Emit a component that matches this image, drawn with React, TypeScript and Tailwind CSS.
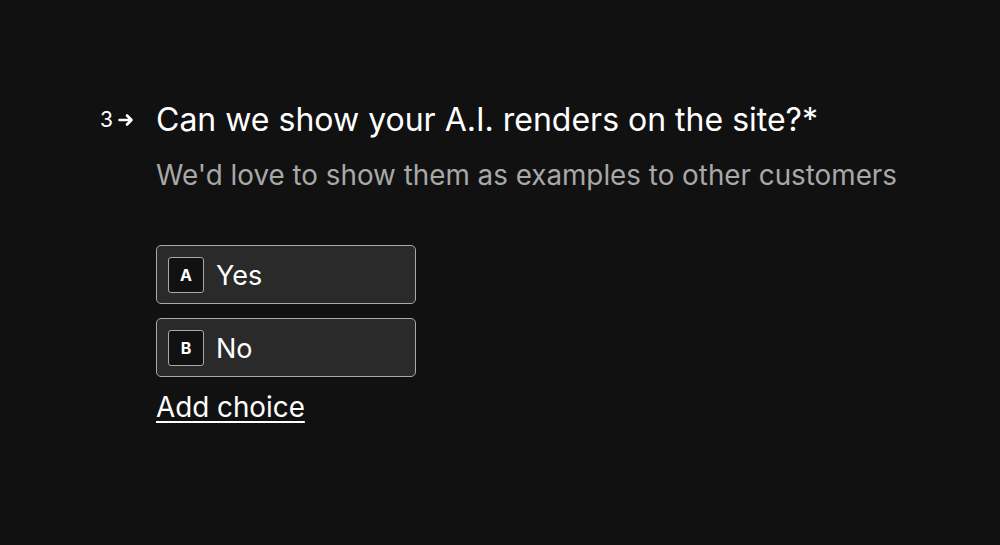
import React from "react";

const font = { fontFamily: "Inter, 'Noto Sans', sans-serif" };

function Choice({ k, label }: { k: string; label: string }) {
  return (
    <div className="flex h-[59px] w-[260px] items-center rounded-[5px] border border-[#a9a9a9] bg-[#2a2a2a] pl-[11px]">
      <div className="flex h-[36px] w-[36px] items-center justify-center rounded-[3px] border border-[#a9a9a9] bg-[#111111] text-[16px] font-bold text-white">
        {k}
      </div>
      <span className="ml-[12px] mt-[3px] text-[27px] text-white">{label}</span>
    </div>
  );
}

export default function App() {
  return (
    <div className="h-[545px] w-[1000px] bg-[#111111] text-white" style={font}>
      <div className="flex items-start pt-[100px]">
        <div className="flex w-[156px] justify-end pr-[22px] pt-[9px]">
          <div className="flex items-center gap-[5px]">
            <span className="text-[21px] font-normal leading-none text-white">3</span>
            <svg width="16" height="14" viewBox="0 0 16 14" fill="none">
              <path d="M1.5 7H13.5M9 2.5L13.5 7L9 11.5" stroke="white" strokeWidth="2.6" strokeLinecap="round" strokeLinejoin="round" />
            </svg>
          </div>
        </div>
        <div className="flex flex-col">
          <h1 className="text-[32px] leading-[40px] text-white">
            Can we show your A.I. renders on the site?*
          </h1>
          <p className="mt-[18px] text-[27.8px] leading-[34px] text-[#a8a8a8]">
            We'd love to show them as examples to other customers
          </p>
          <div className="mt-[53px] flex flex-col gap-[14px]">
            <Choice k="A" label="Yes" />
            <Choice k="B" label="No" />
          </div>
          <a className="mt-[13px] text-[27.8px] leading-[34px] text-white underline underline-offset-[4px]" href="#">
            Add choice
          </a>
        </div>
      </div>
    </div>
  );
}
